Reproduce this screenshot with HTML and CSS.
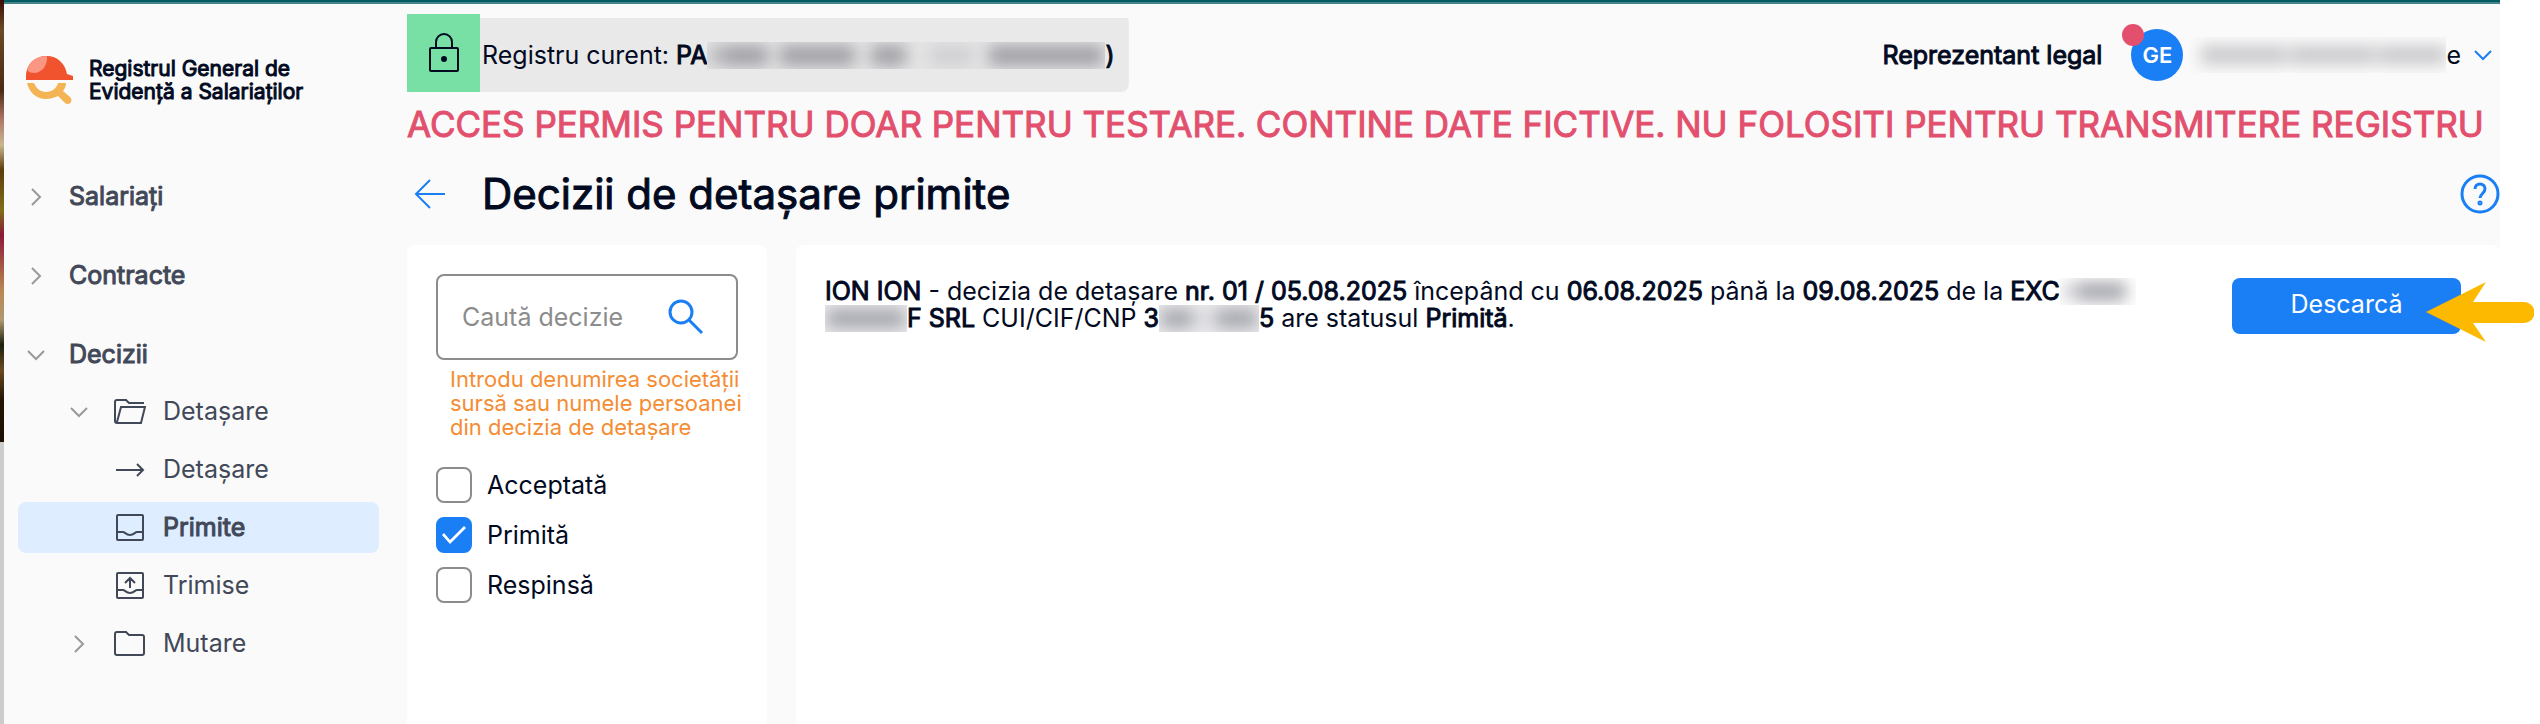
FILE: index.html
```html
<!DOCTYPE html>
<html lang="ro">
<head>
    <meta charset="UTF-8">
    <meta name="viewport" content="width=device-width, initial-scale=1.0">
    <title>Decizii de detașare primite | Registrul General de Evidență a Salariaților</title>
    <link rel="stylesheet" href="styles.css">
</head>
<body>
    <div class="edge"></div>

    <div class="app">
        <aside class="sidebar">
            <a href="#" class="brand">
                <svg class="brand-logo" viewBox="0 0 48 48">
                    <path d="M0 24v-3C0 8 9 0 21 0c10 0 18 7 20 18l6 2v4z" fill="#f1532f"/>
                    <path d="M1 13C4 5 11 0 21 0c1 9-5 17-13 17-3 0-6-1-7-4z" fill="#fa9682"/>
                    <path d="M1 27h7c2 5 6 9 12 9s11-4 12-9h8c0 3-1 5-3 8l7 6c4 4-1 9-5 6l-7-7c-4 2-8 3-12 3C10 43 3 36 1 27z" fill="#f5b454"/>
                </svg>
                <span class="brand-name">Registrul General de<br>Evidență a Salariaților</span>
            </a>

            <nav class="menu">
                <a href="#" class="menu-group">
                    <svg class="chevron" viewBox="0 0 20 20"><path d="M6 2l8 8-8 8"/></svg>
                    Salariați
                </a>
                <a href="#" class="menu-group">
                    <svg class="chevron" viewBox="0 0 20 20"><path d="M6 2l8 8-8 8"/></svg>
                    Contracte
                </a>
                <a href="#" class="menu-group">
                    <svg class="chevron" viewBox="0 0 20 20"><path d="M2 6l8 8 8-8"/></svg>
                    Decizii
                </a>
                <div class="submenu">
                    <a href="#" class="menu-item">
                        <svg class="chevron" viewBox="0 0 20 20"><path d="M2 6l8 8 8-8"/></svg>
                        <svg class="menu-icon" viewBox="0 0 32 32"><path d="M30 7H15l-3-3H3a2 2 0 0 0-2 2v19a2 2 0 0 0 2 2h24l4-16H7L3 26"/></svg>
                        Detașare
                    </a>
                    <a href="#" class="menu-item">
                        <span class="chevron"></span>
                        <svg class="menu-icon" viewBox="0 0 32 32"><path d="M2 16h27M23 10l6 6-6 6"/></svg>
                        Detașare
                    </a>
                    <a href="#" class="menu-item active">
                        <span class="chevron"></span>
                        <svg class="menu-icon" viewBox="0 0 32 32"><rect x="3" y="3" width="26" height="25" rx="1"/><path d="M3 20h6c2 0 3 3 7 3s5-3 7-3h6"/></svg>
                        Primite
                    </a>
                    <a href="#" class="menu-item">
                        <span class="chevron"></span>
                        <svg class="menu-icon" viewBox="0 0 32 32"><rect x="3" y="3" width="26" height="25" rx="1"/><path d="M3 20h6c2 0 3 3 7 3s5-3 7-3h6M16 18V8M11 13l5-5 5 5"/></svg>
                        Trimise
                    </a>
                    <a href="#" class="menu-item">
                        <svg class="chevron" viewBox="0 0 20 20"><path d="M6 2l8 8-8 8"/></svg>
                        <svg class="menu-icon" viewBox="0 0 32 32"><path d="M3 4h9l3 3h13a2 2 0 0 1 2 2v16a2 2 0 0 1-2 2H3a2 2 0 0 1-2-2V6a2 2 0 0 1 2-2z"/></svg>
                        Mutare
                    </a>
                </div>
            </nav>
        </aside>

        <main class="main">
            <header class="topbar">
                <div class="register">
                    <span class="register-lock">
                        <svg viewBox="0 0 32 40"><rect x="2" y="15" width="28" height="23" rx="1"/><path d="M8 15V9a8 8 0 0 1 16 0v6"/><circle cx="16" cy="26" r="2"/></svg>
                    </span>
                    <span>Registru curent: <strong>PA<span class="redacted redacted-company"></span>)</strong></span>
                </div>
                <div class="account">
                    <span class="account-role">Reprezentant legal</span>
                    <span class="avatar">GE</span>
                    <span class="redacted redacted-person"></span>e
                    <button class="account-toggle" aria-label="Meniu utilizator">
                        <svg viewBox="0 0 20 20"><path d="M2 6l8 8 8-8"/></svg>
                    </button>
                </div>
            </header>

            <p class="warning">ACCES PERMIS PENTRU DOAR PENTRU TESTARE. CONTINE DATE FICTIVE. NU FOLOSITI PENTRU TRANSMITERE REGISTRU</p>

            <div class="heading">
                <a href="#" class="back" aria-label="Înapoi">
                    <svg viewBox="0 0 32 32"><path d="M31 16H2M16 2L2 16l14 14"/></svg>
                </a>
                <h1 class="title">Decizii de detașare primite</h1>
                <button class="help" aria-label="Ajutor">
                    <svg viewBox="0 0 40 40"><circle cx="20" cy="20" r="18"/><path d="M15 15c0-3 2-5 5-5s5 2 5 5c0 4-5 5-5 9"/><circle cx="20" cy="29" r="1"/></svg>
                </button>
            </div>

            <div class="content">
                <section class="panel filters">
                    <div class="search">
                        <input type="text" class="search-input" placeholder="Caută decizie" aria-label="Caută decizie" aria-describedby="search-hint">
                        <button class="search-button" aria-label="Caută">
                            <svg viewBox="0 0 36 36"><circle cx="13" cy="13" r="11"/><path d="M21 21l13 13"/></svg>
                        </button>
                    </div>
                    <p class="search-hint" id="search-hint">Introdu denumirea societății sursă sau numele persoanei din decizia de detașare</p>
                    <div class="statuses">
                        <label class="status"><input type="checkbox" class="status-box">Acceptată</label>
                        <label class="status"><input type="checkbox" class="status-box" checked>Primită</label>
                        <label class="status"><input type="checkbox" class="status-box">Respinsă</label>
                    </div>
                </section>

                <section class="panel results">
                    <p class="decision">
                        <strong>ION ION</strong> - decizia de detașare <strong>nr. 01 / 05.08.2025</strong> începând cu <strong>06.08.2025</strong> până la <strong>09.08.2025</strong> de la <strong>EXC<span class="redacted redacted-end"></span><br><span class="redacted redacted-start"></span>F SRL</strong> CUI/CIF/CNP <strong>3<span class="redacted redacted-code"></span>5</strong> are statusul <strong>Primită</strong>.
                    </p>
                    <div class="actions">
                        <button class="download">Descarcă</button>
                        <svg class="pointer" viewBox="0 0 108 60"><path d="M0 30L60 0 47 20h51a10 10 0 0 1 0 21H47l13 19z"/></svg>
                    </div>
                </section>
            </div>
        </main>
    </div>
</body>
</html>
```
FILE: styles.css
```css
:root {
    --primary: #1a7ff5;
    --danger: #e2506e;
    --hint: #f58c32;
    --text: #020a22;
    --menu: #414858;
    --muted: #8c8c8c;
    --page: #fafafa;
}

* {
    margin: 0;
    padding: 0;
    box-sizing: border-box;
}

body {
    display: flex;
    min-height: 100vh;
    padding-right: 40px;
    background-color: #ffffff;
    color: var(--text);
    font-family: Inter, "Noto Sans", sans-serif;
    font-size: 25px;
    line-height: 27px;
}

svg {
    display: block;
    fill: none;
    stroke: currentColor;
    stroke-width: 2;
}

a {
    color: inherit;
    text-decoration: none;
}

button {
    border: none;
    background: none;
    color: var(--primary);
    font: inherit;
    cursor: pointer;
}

/* Heavier text keeps the widths of the regular weight */
strong,
.brand-name,
.menu-group,
.menu-item.active,
.account-role,
.warning,
.title {
    font-weight: 400;
    -webkit-text-stroke: 1px currentColor;
}

/* Strip of the window that sits behind the app */
.edge {
    flex: 0 0 4px;
    background: linear-gradient(#3a0d08 0, #6b4a26 30px, #4a2a14 90px, #b07868 120px, #c8b890 145px, #5c3c0c 170px, #807018 210px, #8c1838 235px, #b88850 290px, #b09870 320px, #1c2010 345px, #6a4a20 370px, #241404 400px, #1c1004 442px, #cccccc 442px);
}

.app {
    flex: 1;
    display: flex;
    min-width: 0;
    border-top: 2px solid #005b63;
    box-shadow: inset 0 2px 0 #428489;
    background-color: var(--page);
}

.sidebar {
    flex: 0 0 403px;
    padding: 51px 28px 20px 14px;
}

.brand {
    display: flex;
    align-items: center;
    gap: 15px;
    margin-left: 8px;
    padding-top: 3px;
}

.brand-logo {
    width: 48px;
    height: 48px;
    stroke: none;
}

.brand-name {
    font-size: 21px;
    line-height: 23px;
}

.menu {
    margin-top: 67px;
    color: var(--menu);
}

.menu-group,
.menu-item {
    display: flex;
    align-items: center;
    height: 51px;
    border-radius: 8px;
}

.menu-group {
    gap: 23px;
    margin-bottom: 28px;
    padding-left: 8px;
}

.menu-item {
    gap: 17px;
    padding-left: 51px;
}

.menu-item .menu-icon {
    margin-left: 8px;
}

.menu-item.active {
    background-color: #deedff;
}

.submenu {
    display: flex;
    flex-direction: column;
    gap: 7px;
    margin-top: -22px;
}

.chevron {
    flex: none;
    width: 20px;
    height: 20px;
    color: #999999;
}

.menu-icon {
    flex: none;
    width: 32px;
    height: 32px;
}

.main {
    flex: 1;
    display: flex;
    flex-direction: column;
    min-width: 0;
    padding-top: 12px;
}

.topbar {
    display: flex;
    justify-content: space-between;
    align-items: center;
}

.register {
    display: flex;
    align-items: center;
    gap: 2px;
    height: 78px;
    padding: 4px 14px 0 0;
    background: linear-gradient(#e9e9e9, #e9e9e9) bottom / 100% 74px no-repeat;
    border-radius: 0 8px 8px 0;
}

.register-lock {
    display: flex;
    align-items: center;
    justify-content: center;
    width: 73px;
    height: 78px;
    margin-top: -4px;
    background-color: #78dfa5;
}

.register-lock svg {
    width: 32px;
    height: 40px;
}

.register-lock circle {
    fill: currentColor;
}

/* Blurred-out names and codes */
.redacted {
    position: relative;
    display: inline-block;
    height: 27px;
    overflow: hidden;
    vertical-align: bottom;
    background-color: #ececee;
}

.redacted::before {
    content: '';
    position: absolute;
    inset: 4px 2px;
    background-color: #a4a5ac;
    filter: blur(8px);
}

.redacted-company {
    width: 398px;
    background-color: #e4e4e5;
}

.redacted-company::before {
    background: linear-gradient(to right, #b8b8bc 4%, #9c9ca2 4% 15%, #e4e4e5 15% 18%, #9c9ca2 18% 37%, #e4e4e5 37% 41%, #9c9ca2 41% 50%, #e4e4e5 50% 56%, #cfcfd2 56% 67%, #e4e4e5 67% 71%, #9c9ca2 71%);
}

.redacted-person {
    width: 257px;
    height: 36px;
    margin-left: 6px;
    background-color: var(--page);
}

.redacted-person::before {
    inset: 9px 0 9px 12px;
    background: linear-gradient(to right, #c6c6ca 34%, #dcdcde 34% 37%, #c6c6ca 37% 70%, #dcdcde 70% 73%, #c6c6ca 73%);
}

.redacted-end {
    width: 76px;
    background-color: #ffffff;
}

.redacted-end::before {
    right: 10px;
    background: linear-gradient(to right, #d8d8dc 25%, #a4a5ac 25%);
}

.redacted-start {
    width: 82px;
}

.redacted-code {
    width: 100px;
}

.redacted-code::before {
    background: linear-gradient(to right, #a4a5ac 32%, #dcdce0 32% 58%, #a4a5ac 58%);
}

.account {
    display: flex;
    align-items: center;
    padding: 4px 7px 0 0;
}

.avatar {
    position: relative;
    display: flex;
    align-items: center;
    justify-content: center;
    width: 52px;
    height: 52px;
    margin-left: 29px;
    border-radius: 50%;
    background-color: var(--primary);
    color: #ffffff;
    font-size: 22px;
    font-weight: 600;
}

.avatar::before {
    content: '';
    position: absolute;
    top: -5px;
    left: -9px;
    width: 22px;
    height: 22px;
    border-radius: 50%;
    background-color: var(--danger);
}

.account-toggle {
    margin-left: 12px;
}

.account-toggle svg {
    width: 20px;
    height: 20px;
}

.warning {
    margin-top: 12px;
    color: var(--danger);
    font-size: 35px;
    line-height: 40px;
}

.heading {
    display: flex;
    align-items: center;
    height: 101px;
    padding-bottom: 2px;
}

.back {
    margin-left: 7px;
    color: var(--primary);
}

.back svg {
    width: 32px;
    height: 32px;
}

.title {
    flex: 1;
    margin-left: 36px;
    font-size: 42px;
    line-height: 52px;
}

.help svg {
    width: 40px;
    height: 40px;
    stroke-width: 3;
}

.content {
    flex: 1;
    display: flex;
    gap: 29px;
}

.panel {
    min-width: 0;
    padding: 29px;
    border-radius: 8px 8px 0 0;
    background-color: #ffffff;
}

.filters {
    flex: 0 0 360px;
}

.search {
    display: flex;
    align-items: center;
    height: 86px;
    padding: 0 32px 0 24px;
    border: 2px solid var(--muted);
    border-radius: 8px;
}

.search-input {
    flex: 1;
    width: 100%;
    min-width: 0;
    border: none;
    outline: none;
    background: none;
    color: inherit;
    font: inherit;
}

.search-input::placeholder {
    color: var(--muted);
    opacity: 1;
}

.search-button svg {
    width: 36px;
    height: 36px;
    stroke-width: 3;
}

.search-hint {
    margin: 7px -14px 0 14px;
    color: var(--hint);
    font-size: 22px;
    line-height: 24px;
}

.statuses {
    display: flex;
    flex-direction: column;
    gap: 14px;
    margin-top: 28px;
}

.status {
    display: flex;
    align-items: center;
    gap: 15px;
}

.status-box {
    appearance: none;
    display: grid;
    place-items: center;
    width: 36px;
    height: 36px;
    border: 2px solid var(--muted);
    border-radius: 8px;
}

.status-box:checked {
    border-color: var(--primary);
    background-color: var(--primary);
}

.status-box:checked::before {
    content: '';
    width: 24px;
    height: 18px;
    background-color: #ffffff;
    clip-path: polygon(0 9px, 2px 7px, 8px 14px, 22px 0, 24px 2px, 8px 18px);
}

.results {
    flex: 1;
    display: flex;
    justify-content: space-between;
    align-items: flex-start;
    gap: 20px;
    padding: 33px 39px 33px 29px;
}

.actions {
    position: relative;
    flex: none;
}

.download {
    width: 229px;
    height: 56px;
    padding-bottom: 4px;
    border-radius: 8px;
    background-color: var(--primary);
    color: #ffffff;
}

/* Marker drawn over the button */
.pointer {
    position: absolute;
    top: 4px;
    right: -73px;
    width: 108px;
    height: 60px;
    fill: #fdb900;
    stroke: none;
}
```
